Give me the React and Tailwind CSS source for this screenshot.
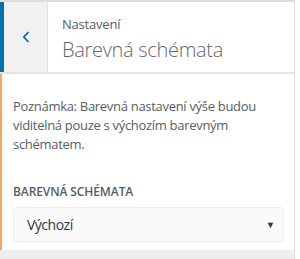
import React from 'react';

function App() {
    return (
        <div className="w-[300px] h-[259px] bg-white overflow-hidden" style={{ fontFamily: '"Open Sans", "Noto Sans", sans-serif' }}>
            <div className="w-[295px] h-full flex flex-col border-t-2 border-r border-[#dddddd]">

                <div className="flex h-[72px] shrink-0 border-b-2 border-[#e5e5e5]">
                    <button className="w-[48px] shrink-0 bg-[#f1f1f1] border-l-4 border-[#0073aa] border-r border-r-[#e2e2e2] flex items-center justify-center">
                        <svg width="10" height="14" viewBox="0 0 10 14" fill="none">
                            <path d="M7.5 2 L2.8 7 L7.5 12" stroke="#0073aa" strokeWidth="1.8" />
                        </svg>
                    </button>
                    <div className="flex flex-col justify-center pl-[14px] pt-[4px]">
                        <span className="text-[13px] leading-[18px] text-[#555d66] tracking-[-0.2px]">Nastavení</span>
                        <span className="text-[20px] leading-[28px] font-light text-[#62676d] mt-[3px] tracking-[-0.3px]">Barevná schémata</span>
                    </div>
                </div>

                <div className="flex-1 border-l-2 border-[#f3a85a] pl-[11px] pt-[23px]">
                    <p className="text-[13px] leading-[19px] text-[#555d66] tracking-[-0.3px] pr-[30px]">
                        Poznámka: Barevná nastavení výše budou viditelná pouze s výchozím barevným schématem.
                    </p>
                    <div className="mt-[29px] text-[12px] font-semibold text-[#555d66] uppercase tracking-[-0.1px]">
                        Barevná schémata
                    </div>
                    <div className="mt-[6px] h-[35px] w-[271px] rounded-[4px] border border-[#ececec] bg-[#fafafa] flex items-center pr-[8px]">
                        <span className="ml-[13px] text-[14px] text-[#32373c] tracking-[-0.5px]">Výchozí</span>
                        <span className="ml-auto text-[9px] text-[#333]">▼</span>
                    </div>
                </div>

                <div className="h-[9px] shrink-0 bg-[#eeeeee]"></div>
            </div>
        </div>
    );
}

export default App;
